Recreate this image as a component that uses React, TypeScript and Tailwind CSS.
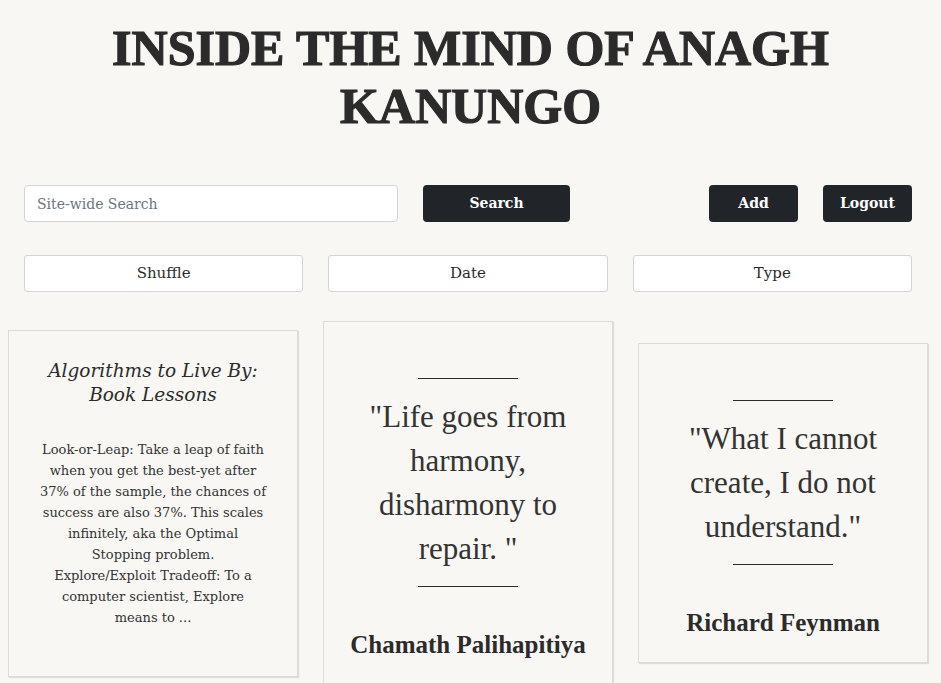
import { ReactNode } from 'react';

const serif = "font-['DejaVu_Serif',serif]";
const display = "font-['Liberation_Serif','Times_New_Roman',serif]";

function QuoteCard({ quote, author }: { quote: string; author: string }) {
  return (
    <div className="w-[290px] shrink-0 border border-[#dcdbd7] shadow-[1px_1px_1px_rgba(0,0,0,0.1)] pt-[56px] pb-[24px] px-5 flex flex-col items-center text-center">
      <div className="w-[100px] h-px bg-[#2b2b2b]" />
      <p className={`${display} mt-4 text-[31px] leading-[44px] text-[#333]`}>{quote}</p>
      <div className="mt-[15px] w-[100px] h-px bg-[#2b2b2b]" />
      <p className={`${display} mt-[43px] text-[25px] leading-[30px] font-bold text-[#2b2b2b]`}>{author}</p>
    </div>
  );
}

function DarkButton({ children, width }: { children: ReactNode; width: string }) {
  return (
    <button className={`${width} h-[37px] rounded-[4px] bg-[#212529] text-white text-[14px] font-bold ${serif}`}>
      {children}
    </button>
  );
}

export default function App() {
  return (
    <div className="min-h-screen bg-[#f8f7f3] text-[#2b2b2b] overflow-hidden">
      <h1
        className={`${display} pt-[19px] text-center text-[50px] leading-[58px] font-bold text-[#2b2b2b] [-webkit-text-stroke:1.2px_#2b2b2b]`}
      >
        INSIDE THE MIND OF ANAGH KANUNGO
      </h1>

      <div className="mt-[50px] pl-6 pr-[29px]">
        {/* search + actions */}
        <div className="flex items-center justify-between">
          <div className="flex gap-[25px]">
            <input
              placeholder="Site-wide Search"
              className={`${serif} w-[374px] h-[37px] px-3 rounded-[4px] border border-[#d4d4d4] bg-white text-[14px] placeholder:text-[#6c757d] outline-none`}
            />
            <DarkButton width="w-[147px]">Search</DarkButton>
          </div>
          <div className="flex gap-[25px]">
            <DarkButton width="w-[89px]">Add</DarkButton>
            <DarkButton width="w-[89px]">Logout</DarkButton>
          </div>
        </div>

        {/* sort buttons */}
        <div className="mt-[33px] grid grid-cols-3 gap-[25px]">
          {['Shuffle', 'Date', 'Type'].map((label) => (
            <button
              key={label}
              className={`${serif} h-[37px] rounded-[3px] border border-[#d4d4d4] bg-white text-[15px] text-[#2b2b2b]`}
            >
              {label}
            </button>
          ))}
        </div>
      </div>

      {/* cards */}
      <div className="mt-[29px] pl-2 flex items-center gap-[25px]">
        <div className="w-[290px] shrink-0 h-[347px] border border-[#dcdbd7] shadow-[1px_1px_1px_rgba(0,0,0,0.1)] pt-[28px] px-[30px] text-center">
          <h3 className={`${serif} italic text-[18.5px] leading-[24px] text-[#2b2b2b]`}>
            Algorithms to Live By: Book Lessons
          </h3>
          <p className={`${serif} mt-8 text-[13px] leading-[21px] text-[#333]`}>
            Look-or-Leap: Take a leap of faith when you get the best-yet after 37% of the sample, the chances of
            success are also 37%. This scales infinitely, aka the Optimal Stopping problem.
            <br />
            Explore/Exploit Tradeoff: To a computer scientist, Explore means to ...
          </p>
        </div>
        <QuoteCard quote={'"Life goes from harmony, disharmony to repair. "'} author="Chamath Palihapitiya" />
        <QuoteCard quote={'"What I cannot create, I do not understand."'} author="Richard Feynman" />
      </div>
    </div>
  );
}
